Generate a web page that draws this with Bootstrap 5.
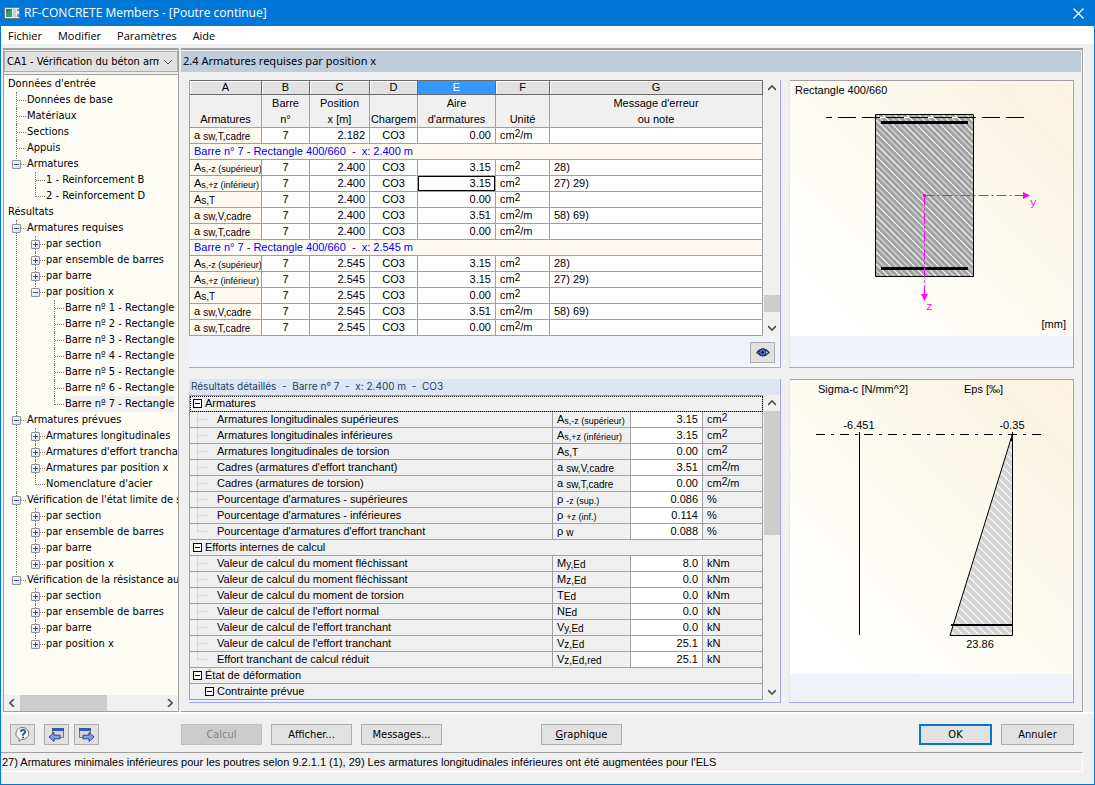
<!DOCTYPE html>
<html lang="fr">
<head>
<meta charset="utf-8">
<meta name="viewport" content="width=device-width, initial-scale=1">
<title>RF-CONCRETE Members - [Poutre continue]</title>
<link href="https://cdn.jsdelivr.net/npm/bootstrap@5.3.0/dist/css/bootstrap.min.css" rel="stylesheet">
<style>
:root{--line:#a0a0a0;--lilac:#a4a4ee;--pane:#f0f4fa;--face:#f0f0f0;--ui:"DejaVu Sans Condensed","DejaVu Sans",sans-serif;--title:"Open Sans",sans-serif;--grid:"Liberation Sans",Arial,sans-serif}
body{font-family:var(--ui);font-size:11px;line-height:16px;color:#000;background:var(--face)}
a{color:inherit;text-decoration:none}
svg{display:block}
.window{border:1px solid #0078d7;border-top:0;min-height:100vh}
.titlebar{background:#0078d7;color:#fff;font:12px/26px var(--title);height:26px;padding:0 4px 0 3px}
.titlebar button{background:none;border:0;padding:6px}
.menubar{background:#fff;height:18px;font:11px/20px var(--title);padding-left:7px;margin-bottom:4px}
.workspace{border-bottom:2px solid #fff;padding:0 11px 0 2px;gap:2px}
.side{flex:0 0 176px;border:1px solid var(--line);border-top-width:2px;min-width:0}
.side .form-select{font:11px/18px var(--ui);height:21px;margin:1px 0 2px;padding:0 18px 0 2px;border:1px solid #adadad;border-radius:0;color:#000;background:#e1e1e1 url("data:image/svg+xml,%3Csvg xmlns='http://www.w3.org/2000/svg' viewBox='0 0 10 6'%3E%3Cpath d='M1 1l4 4 4-4' fill='none' stroke='%23555'/%3E%3C/svg%3E") no-repeat right 4px center/10px 6px}
.treebox{border-top:1px solid var(--line);background:#fcfcf4;overflow:hidden}
.tree,.tree ul{list-style:none;margin:0;padding:0}
.tree{overflow:hidden;padding-top:1px}
.tree>li>a{padding-left:4px}
.tree a{white-space:nowrap;display:inline-block;height:16px;vertical-align:top}
.tree ul>li{position:relative;padding-left:11px}
.tree ul{margin-left:12px}
.tree ul ul{margin-left:8px}
.tree ul>li::before{content:"";position:absolute;left:0;top:0;bottom:0;border-left:1px dotted #777}
.tree ul>li:last-child::before{bottom:auto;height:9px}
.tree ul>li::after{content:"";position:absolute;left:1px;top:8px;width:9px;border-top:1px dotted #777}
.tog{position:absolute;z-index:1;left:-4px;top:4px;width:9px;height:9px;border:1px solid #919191;border-radius:1px;background:linear-gradient(135deg,#fff,#dcdcdc);padding:0}
.tog::before,.tog.plus::after{content:"";position:absolute;background:#2b4b9b;left:1px;top:3px;width:5px;height:1px}
.tog.plus::after{left:3px;top:1px;width:1px;height:5px}
.tree .sel{background:#f0f0f0}
.sbar{background:var(--face)}
.thumb{background:#cdcdcd}
.sbar button{border:0;background:none;padding:0;width:16px;height:16px;display:grid;place-items:center;flex:none}
.tables .sbar{margin-left:1px}
.content-frame{border:solid var(--line);border-width:2px 1px 1px 0;min-width:0;box-shadow:1px 0 #fff}
.heading{background:#bfcddb;height:21px;margin:1px 1px 0 0;padding-left:2px;font:11px/19px "Noto Sans",sans-serif}
.panes{padding:8px 8px 7px;gap:8px}
.tables{gap:11px;min-width:0}
.pane{background:var(--pane);border:solid var(--lilac);border-width:0 1px 1px 0}
.grid{font:11px/15px var(--grid);table-layout:fixed;border-collapse:separate;border-spacing:0;width:100%;margin:0;border-left:1px solid var(--line)}
.grid td,.grid th{height:16px;padding:0 4px;border:solid var(--line);border-width:0 1px 1px 0;overflow:hidden;white-space:nowrap;font-weight:400}
.grid td{background:#fff}
.grid .letters th{background:#e1e1e1;border-color:#696969;border-top-width:1px;height:15px;line-height:13px;padding:0;box-shadow:inset 1px 1px #fff}
.grid .letters .on{background:#3399ff;color:#fff;box-shadow:none}
.grid .names th{background:var(--face);height:33px;line-height:16px;vertical-align:bottom;padding:0}
.grid .lab{background:#fffaf0}
.grid .group{background:#fffaf0;color:#0000ff}
.grid .num{text-align:right}
.grid .cur{box-shadow:inset 0 0 0 1px #000}
.grid sub,.grid sup{font-size:10px;position:static;line-height:0}
.grid sub{vertical-align:-1px}
.grid .long{font-size:9px}
.grid sup{vertical-align:2px}
.detail{border-top:1px solid var(--line)}
.detail td{background:var(--face)}
.detail .num{background:#fff}
.detail td:first-child{padding:0}
.detail .focus td{outline:1px dotted #000;outline-offset:-1px}
.branch{display:block;position:relative;padding-left:27px}
.branch::before{content:"";position:absolute;left:7px;top:0;height:16px;border-left:1px solid #d9d9d9}
.branch.last::before{height:8px}
.branch::after{content:"";position:absolute;left:8px;top:7px;width:11px;border-top:1px solid #d9d9d9}
.node{display:flex;align-items:center;gap:3px;padding-left:3px}
.node.deep{padding-left:15px}
.node button{width:9px;height:9px;border:1px solid #000;background:#fff;padding:0;display:grid;place-items:center}
.node button::before{content:"";width:5px;height:1px;background:#000}
.detail-title{background:#dce6f4;color:#1f4266;height:16px;padding-left:2px;font:10px/15px Inter,sans-serif;white-space:pre}
.eyebar{height:31px;padding:0 5px}
.detail-wrap{margin-bottom:2px}
.graphics{flex:0 0 285px;gap:11px}
.graphics .pane{border-left:1px solid #dce6f8}
.graphics .section-pane{padding-bottom:31px}
.graphics svg{width:100%;height:auto;border-top:1px solid var(--line);box-sizing:content-box}
.graphics text{font:11px var(--grid)}
.graphics .axis{font:11px "Liberation Mono",monospace}
.glow{background:linear-gradient(45deg,#fff 10%,#fdfaf0 55%,#f9f4e2 85%,#fcf3e2)}
.foot{padding:10px 20px 7px 9px;gap:9px}
.foot .next{margin-left:-4px}
.foot .calc{margin-left:73px}
.foot .graph{margin-left:90px}
.cmd{--bs-btn-padding-x:0;--bs-btn-padding-y:0;--bs-btn-font-size:11px;--bs-btn-line-height:19px;--bs-btn-border-radius:0;--bs-btn-color:#000;--bs-btn-bg:#e1e1e1;--bs-btn-border-color:#adadad;--bs-btn-hover-bg:#e5f1fb;--bs-btn-hover-border-color:#0078d7;--bs-btn-disabled-color:#838383;--bs-btn-disabled-bg:#ccc;--bs-btn-disabled-border-color:#bfbfbf;--bs-btn-disabled-opacity:1;font-family:var(--ui);width:81px;height:21px}
.cmd.icon{width:25px;display:grid;place-items:center}
.cmd.end{width:73px}
.cmd.primary{border:2px solid #0078d7;line-height:17px}
.status{border-top:1px solid var(--line);border-bottom:1px solid #fff;border-right:1px solid #fff;margin:0 11px 12px 0;height:20px;font:11px/19px var(--grid);padding-left:1px;white-space:nowrap;overflow:hidden}
</style>
</head>
<body>
<div class="window d-flex flex-column">
<header class="titlebar d-flex align-items-center gap-1">
 <svg width="16" height="14" viewBox="0 0 16 14"><path fill="#e9eef2" stroke="#6b7c8c" d="M.5 1.5h15v11H.5z"/><path fill="#3c6e8c" d="M2 3h6v8H2z"/><path fill="#3f9a6a" d="M2 7l6-4v8H2z"/><path fill="#bcd6c8" d="M9 3h3v8H9z"/><path fill="#7d93a5" d="M13 3h2v2h-2zM13 8h2v3h-2z"/></svg>
 <span class="flex-grow-1">RF-CONCRETE Members - [Poutre continue]</span>
 <button type="button" aria-label="Fermer"><svg width="11" height="11" viewBox="0 0 11 11"><path d="M.5.5l10 10M10.500.5l-10 10" stroke="#fff" stroke-width="1.200"/></svg></button>
</header>
<nav class="menubar d-flex gap-3"><a href="#">Fichier</a><a href="#">Modifier</a><a href="#">Paramètres</a><a href="#">Aide</a></nav>

<div class="workspace d-flex flex-grow-1">
<aside class="side d-flex flex-column">
 <select class="form-select" aria-label="Cas de calcul"><option>CA1 - Vérification du béton armé</option></select>
 <div class="treebox d-flex flex-column flex-grow-1">
 <ul class="tree flex-grow-1">
 <li><a href="#">Données d'entrée</a><ul>
  <li><a href="#">Données de base</a></li><li><a href="#">Matériaux</a></li><li><a href="#">Sections</a></li><li><a href="#">Appuis</a></li>
  <li><button class="tog" aria-label="Réduire"></button><a href="#">Armatures</a><ul><li><a href="#">1 - Reinforcement B</a></li><li><a href="#">2 - Reinforcement D</a></li></ul></li></ul></li>
 <li><a href="#">Résultats</a><ul>
  <li><button class="tog" aria-label="Réduire"></button><a href="#">Armatures requises</a><ul>
   <li><button class="tog plus" aria-label="Développer"></button><a href="#">par section</a></li>
   <li><button class="tog plus" aria-label="Développer"></button><a href="#">par ensemble de barres</a></li>
   <li><button class="tog plus" aria-label="Développer"></button><a href="#">par barre</a></li>
   <li><button class="tog" aria-label="Réduire"></button><a href="#">par position x</a><ul>
    <li><a href="#">Barre nº 1 - Rectangle</a></li><li><a href="#">Barre nº 2 - Rectangle</a></li><li><a href="#">Barre nº 3 - Rectangle</a></li><li><a href="#">Barre nº 4 - Rectangle</a></li><li><a href="#">Barre nº 5 - Rectangle</a></li><li><a href="#">Barre nº 6 - Rectangle</a></li><li><a href="#" class="sel">Barre nº 7 - Rectangle</a></li></ul></li></ul></li>
  <li><button class="tog" aria-label="Réduire"></button><a href="#">Armatures prévues</a><ul>
   <li><button class="tog plus" aria-label="Développer"></button><a href="#">Armatures longitudinales</a></li>
   <li><button class="tog plus" aria-label="Développer"></button><a href="#">Armatures d'effort tranchant</a></li>
   <li><button class="tog plus" aria-label="Développer"></button><a href="#">Armatures par position x</a></li>
   <li><a href="#">Nomenclature d'acier</a></li></ul></li>
  <li><button class="tog" aria-label="Réduire"></button><a href="#">Vérification de l'état limite de service</a><ul>
   <li><button class="tog plus" aria-label="Développer"></button><a href="#">par section</a></li>
   <li><button class="tog plus" aria-label="Développer"></button><a href="#">par ensemble de barres</a></li>
   <li><button class="tog plus" aria-label="Développer"></button><a href="#">par barre</a></li>
   <li><button class="tog plus" aria-label="Développer"></button><a href="#">par position x</a></li></ul></li>
  <li><button class="tog" aria-label="Réduire"></button><a href="#">Vérification de la résistance au</a><ul>
   <li><button class="tog plus" aria-label="Développer"></button><a href="#">par section</a></li>
   <li><button class="tog plus" aria-label="Développer"></button><a href="#">par ensemble de barres</a></li>
   <li><button class="tog plus" aria-label="Développer"></button><a href="#">par barre</a></li>
   <li><button class="tog plus" aria-label="Développer"></button><a href="#">par position x</a></li></ul></li></ul></li>
 </ul>
 <div class="sbar d-flex"><button aria-label="Gauche"><svg width="6" height="8" viewBox="0 0 6 8"><path d="M5 0L1 4l4 4" fill="none" stroke="#505050" stroke-width="1.700"/></svg></button><div class="thumb w-50"></div><button class="ms-auto" aria-label="Droite"><svg width="6" height="8" viewBox="0 0 6 8"><path d="M1 0l4 4-4 4" fill="none" stroke="#505050" stroke-width="1.700"/></svg></button></div>
 </div>
</aside>

<main class="content-frame flex-grow-1">
<h1 class="heading">2.4 Armatures requises par position x</h1>
<div class="panes d-flex">
<div class="tables d-flex flex-column flex-grow-1">
<section class="pane">
 <div class="d-flex">
 <table class="grid flex-grow-1">
 <colgroup><col style="width:72px"><col style="width:48px"><col style="width:60px"><col style="width:48px"><col style="width:78px"><col style="width:54px"><col></colgroup>
 <thead class="text-center">
 <tr class="letters"><th>A</th><th>B</th><th>C</th><th>D</th><th class="on">E</th><th>F</th><th>G</th></tr>
 <tr class="names"><th>Armatures</th><th>Barre<br>n°</th><th>Position<br>x [m]</th><th>Chargem</th><th>Aire<br>d'armatures</th><th>Unité</th><th>Message d'erreur<br>ou note</th></tr>
 </thead>
 <tbody>
 <tr><td class="lab">a <sub>sw,T,cadre</sub></td><td class="text-center">7</td><td class="num">2.182</td><td class="text-center">CO3</td><td class="num">0.00</td><td>cm<sup>2</sup>/m</td><td></td></tr>
 <tr><td class="group" colspan="7">Barre n° 7 - Rectangle 400/660&nbsp; -&nbsp; x: 2.400 m</td></tr>
 <tr><td class="lab">A<sub class="long">s,-z (supérieur)</sub></td><td class="text-center">7</td><td class="num">2.400</td><td class="text-center">CO3</td><td class="num">3.15</td><td>cm<sup>2</sup></td><td>28)</td></tr>
 <tr><td class="lab">A<sub class="long">s,+z (inférieur)</sub></td><td class="text-center">7</td><td class="num">2.400</td><td class="text-center">CO3</td><td class="num cur">3.15</td><td>cm<sup>2</sup></td><td>27) 29)</td></tr>
 <tr><td class="lab">A<sub>s,T</sub></td><td class="text-center">7</td><td class="num">2.400</td><td class="text-center">CO3</td><td class="num">0.00</td><td>cm<sup>2</sup></td><td></td></tr>
 <tr><td class="lab">a <sub>sw,V,cadre</sub></td><td class="text-center">7</td><td class="num">2.400</td><td class="text-center">CO3</td><td class="num">3.51</td><td>cm<sup>2</sup>/m</td><td>58) 69)</td></tr>
 <tr><td class="lab">a <sub>sw,T,cadre</sub></td><td class="text-center">7</td><td class="num">2.400</td><td class="text-center">CO3</td><td class="num">0.00</td><td>cm<sup>2</sup>/m</td><td></td></tr>
 <tr><td class="group" colspan="7">Barre n° 7 - Rectangle 400/660&nbsp; -&nbsp; x: 2.545 m</td></tr>
 <tr><td class="lab">A<sub class="long">s,-z (supérieur)</sub></td><td class="text-center">7</td><td class="num">2.545</td><td class="text-center">CO3</td><td class="num">3.15</td><td>cm<sup>2</sup></td><td>28)</td></tr>
 <tr><td class="lab">A<sub class="long">s,+z (inférieur)</sub></td><td class="text-center">7</td><td class="num">2.545</td><td class="text-center">CO3</td><td class="num">3.15</td><td>cm<sup>2</sup></td><td>27) 29)</td></tr>
 <tr><td class="lab">A<sub>s,T</sub></td><td class="text-center">7</td><td class="num">2.545</td><td class="text-center">CO3</td><td class="num">0.00</td><td>cm<sup>2</sup></td><td></td></tr>
 <tr><td class="lab">a <sub>sw,V,cadre</sub></td><td class="text-center">7</td><td class="num">2.545</td><td class="text-center">CO3</td><td class="num">3.51</td><td>cm<sup>2</sup>/m</td><td>58) 69)</td></tr>
 <tr><td class="lab">a <sub>sw,T,cadre</sub></td><td class="text-center">7</td><td class="num">2.545</td><td class="text-center">CO3</td><td class="num">0.00</td><td>cm<sup>2</sup>/m</td><td></td></tr>
 </tbody></table>
 <div class="sbar d-flex flex-column"><button aria-label="Haut"><svg width="8" height="6" viewBox="0 0 8 6"><path d="M0 5l4-4 4 4" fill="none" stroke="#505050" stroke-width="1.700"/></svg></button><div class="flex-grow-1"></div><div class="thumb mb-2" style="height:17px"></div><button aria-label="Bas"><svg width="8" height="6" viewBox="0 0 8 6"><path d="M0 1l4 4 4-4" fill="none" stroke="#505050" stroke-width="1.700"/></svg></button></div>
 </div>
 <div class="eyebar d-flex align-items-end justify-content-end pb-1"><button type="button" class="btn cmd icon" aria-label="Afficher"><svg width="14" height="11" viewBox="0 0 14 11"><path d="M1 5.500Q7-1.500 13 5.500 7 12 1 5.500z" fill="#e8ecf4" stroke="#333" stroke-width="1.300"/><circle cx="6.500" cy="5.300" r="3.300" fill="#4a6fe0" stroke="#1f2f70"/><circle cx="6.500" cy="5.300" r="1.300" fill="#111"/></svg></button></div>
</section>

<section class="pane">
 <h2 class="detail-title m-0">Résultats détaillés  -  Barre n° 7  -  x: 2.400 m  -  CO3</h2>
 <div class="detail-wrap d-flex">
 <table class="grid detail flex-grow-1">
 <colgroup><col><col style="width:78px"><col style="width:72px"><col style="width:60px"></colgroup>
 <tbody>
 <tr class="focus"><td colspan="4"><span class="node"><button aria-label="Réduire"></button>Armatures</span></td></tr>
 <tr><td><span class="branch">Armatures longitudinales supérieures</span></td><td>A<sub class="long">s,-z (supérieur)</sub></td><td class="num">3.15</td><td>cm<sup>2</sup></td></tr>
 <tr><td><span class="branch">Armatures longitudinales inférieures</span></td><td>A<sub class="long">s,+z (inférieur)</sub></td><td class="num">3.15</td><td>cm<sup>2</sup></td></tr>
 <tr><td><span class="branch">Armatures longitudinales de torsion</span></td><td>A<sub>s,T</sub></td><td class="num">0.00</td><td>cm<sup>2</sup></td></tr>
 <tr><td><span class="branch">Cadres (armatures d'effort tranchant)</span></td><td>a <sub>sw,V,cadre</sub></td><td class="num">3.51</td><td>cm<sup>2</sup>/m</td></tr>
 <tr><td><span class="branch">Cadres (armatures de torsion)</span></td><td>a <sub>sw,T,cadre</sub></td><td class="num">0.00</td><td>cm<sup>2</sup>/m</td></tr>
 <tr><td><span class="branch">Pourcentage d'armatures - supérieures</span></td><td>ρ <sub class="long">-z (sup.)</sub></td><td class="num">0.086</td><td>%</td></tr>
 <tr><td><span class="branch">Pourcentage d'armatures - inférieures</span></td><td>ρ <sub class="long">+z (inf.)</sub></td><td class="num">0.114</td><td>%</td></tr>
 <tr><td><span class="branch last">Pourcentage d'armatures d'effort tranchant</span></td><td>ρ <sub>w</sub></td><td class="num">0.088</td><td>%</td></tr>
 <tr><td colspan="4"><span class="node"><button aria-label="Réduire"></button>Efforts internes de calcul</span></td></tr>
 <tr><td><span class="branch">Valeur de calcul du moment fléchissant</span></td><td>M<sub>y,Ed</sub></td><td class="num">8.0</td><td>kNm</td></tr>
 <tr><td><span class="branch">Valeur de calcul du moment fléchissant</span></td><td>M<sub>z,Ed</sub></td><td class="num">0.0</td><td>kNm</td></tr>
 <tr><td><span class="branch">Valeur de calcul du moment de torsion</span></td><td>T<sub>Ed</sub></td><td class="num">0.0</td><td>kNm</td></tr>
 <tr><td><span class="branch">Valeur de calcul de l'effort normal</span></td><td>N<sub>Ed</sub></td><td class="num">0.0</td><td>kN</td></tr>
 <tr><td><span class="branch">Valeur de calcul de l'effort tranchant</span></td><td>V<sub>y,Ed</sub></td><td class="num">0.0</td><td>kN</td></tr>
 <tr><td><span class="branch">Valeur de calcul de l'effort tranchant</span></td><td>V<sub>z,Ed</sub></td><td class="num">25.1</td><td>kN</td></tr>
 <tr><td><span class="branch last">Effort tranchant de calcul réduit</span></td><td>V<sub>z,Ed,red</sub></td><td class="num">25.1</td><td>kN</td></tr>
 <tr><td colspan="4"><span class="node"><button aria-label="Réduire"></button>État de déformation</span></td></tr>
 <tr><td colspan="4"><span class="node deep"><button aria-label="Réduire"></button>Contrainte prévue</span></td></tr>
 </tbody></table>
 <div class="sbar d-flex flex-column"><button aria-label="Haut"><svg width="8" height="6" viewBox="0 0 8 6"><path d="M0 5l4-4 4 4" fill="none" stroke="#505050" stroke-width="1.700"/></svg></button><div class="thumb" style="height:124px"></div><button class="mt-auto" aria-label="Bas"><svg width="8" height="6" viewBox="0 0 8 6"><path d="M0 1l4 4 4-4" fill="none" stroke="#505050" stroke-width="1.700"/></svg></button></div>
 </div>
</section>
</div>

<div class="graphics d-flex flex-column">
<section class="pane section-pane">
<svg class="glow" viewBox="790 81 283 255" role="img" aria-label="Section Rectangle 400/660">
 <defs>
 <pattern id="hatch" width="12" height="12" patternUnits="userSpaceOnUse"><path d="M0 0l12 12M-1 11l2 2M11-1l2 2" stroke="#fff" stroke-width="1.200"/><path d="M6 0l6 6M0 6l6 6M5-1l2 2M-1 5l2 2M11 5l2 2M5 11l2 2" stroke="#d0d0d0" stroke-width="1.500"/></pattern>
 <pattern id="hatch2" width="8" height="8" patternUnits="userSpaceOnUse"><path d="M0 0l8 8M-1 7l2 2M7-1l2 2" stroke="#fff" stroke-width="1.100"/></pattern>
 </defs>
 <text x="795" y="94">Rectangle 400/660</text>
 <path fill="#a0a0a0" d="M875.500 114.500h98v162h-98z"/><path fill="url(#hatch)" stroke="#000" d="M875.500 114.500h98v162h-98z"/>
 <g shape-rendering="crispEdges">
 <path stroke="#fff" d="M876 117.500h97"/>
 <path stroke="#000" d="M826 117.500h6"/><path stroke="#000" stroke-dasharray="18 6" d="M838 117.500h186"/>
 <path stroke="#000" stroke-width="3" d="M881 122.500h87M881 268.500h87"/>
 </g>
 <path stroke="#f0f" fill="none" stroke-dasharray="10 3 2 3" d="M924.500 195.500h99M924.500 195.500v100"/>
 <path fill="#f0f" d="M1023 192l7 3.500-7 3.500zM921 294h7l-3.500 7zM923 194h3v3h-3z"/>
 <text class="axis" fill="#f0f" x="1030" y="206">y</text><text class="axis" fill="#f0f" x="926" y="310">z</text>
 <text x="1066" y="328" text-anchor="end">[mm]</text>
</svg>
</section>
<section class="pane flex-grow-1">
<svg class="glow" viewBox="790 380 283 294" role="img" aria-label="Contraintes et déformations">
 <text x="818" y="393">Sigma-c [N/mm^2]</text><text x="964" y="393">Eps [‰]</text>
 <text x="859" y="429" text-anchor="middle">-6.451</text><text x="1012" y="429" text-anchor="middle">-0.35</text><text x="980" y="648" text-anchor="middle">23.86</text>
 <path fill="#d3d3d3" d="M1012.500 434l-62.500 201.500h62.500z"/><path fill="url(#hatch2)" stroke="#000" d="M1012.500 434l-62.500 201.500h62.500z"/>
 <path d="M1013 433l-3 8h3z"/>
 <g shape-rendering="crispEdges"><path stroke="#fff" d="M816 434.500h228"/><path stroke="#000" stroke-dasharray="9 6 3 6" d="M816 434.500h228"/>
 <path stroke="#000" d="M859.500 432v203M1012.500 432v203"/><path stroke="#000" stroke-width="2" d="M951 625h61"/></g>
</svg>
</section>
</div>
</div>
</main>
</div>

<footer>
<div class="foot d-flex">
 <button type="button" class="btn cmd icon" aria-label="Aide"><svg width="16" height="17" viewBox="0 0 16 17"><path d="M8 1.500a6.500 6 0 1 1-1.500 12L4 15.500l.3-2.800A6.500 6 0 0 1 8 1.500z" fill="#f4f4f4" stroke="#777"/><path d="M5.800 5.800Q6 3.800 8 3.800t2.200 1.700Q10.300 7 8 8.400v1.300" fill="none" stroke="#2f4793" stroke-width="1.700"/><path fill="#2f4793" d="M7.100 10.700h1.900v1.600H7.100z"/></svg></button>
 <button type="button" class="btn cmd icon" aria-label="Page précédente"><svg width="17" height="16" viewBox="0 0 17 16"><path d="M4.500 1.500h11v9h-11z" fill="#d4d4d4" stroke="#777"/><path d="M4 1h12v3H4z" fill="#3b55a8"/><path d="M1 10l5-4.500v2.700h6v3.600H6v2.700z" fill="#7ba3ec" stroke="#2a3f8c"/></svg></button>
 <button type="button" class="btn cmd icon next" aria-label="Page suivante"><svg width="17" height="16" viewBox="0 0 17 16"><path d="M1.500 1.500h11v9h-11z" fill="#d4d4d4" stroke="#777"/><path d="M1 1h12v3H1z" fill="#3b55a8"/><path d="M16 10l-5-4.500v2.700H5v3.600h6v2.700z" fill="#7ba3ec" stroke="#2a3f8c"/></svg></button>
 <button type="button" class="btn cmd calc" disabled>Calcul</button>
 <button type="button" class="btn cmd">Afficher...</button>
 <button type="button" class="btn cmd">Messages...</button>
 <button type="button" class="btn cmd graph"><u>G</u>raphique</button>
 <button type="button" class="btn cmd end primary ms-auto">OK</button>
 <button type="button" class="btn cmd end">Annuler</button>
</div>
<div class="status">27) Armatures minimales inférieures pour les poutres selon 9.2.1.1 (1), 29) Les armatures longitudinales inférieures ont été augmentées pour l'ELS</div>
</footer>
</div>
<script src="https://cdn.jsdelivr.net/npm/bootstrap@5.3.0/dist/js/bootstrap.bundle.min.js"></script>
</body>
</html>
